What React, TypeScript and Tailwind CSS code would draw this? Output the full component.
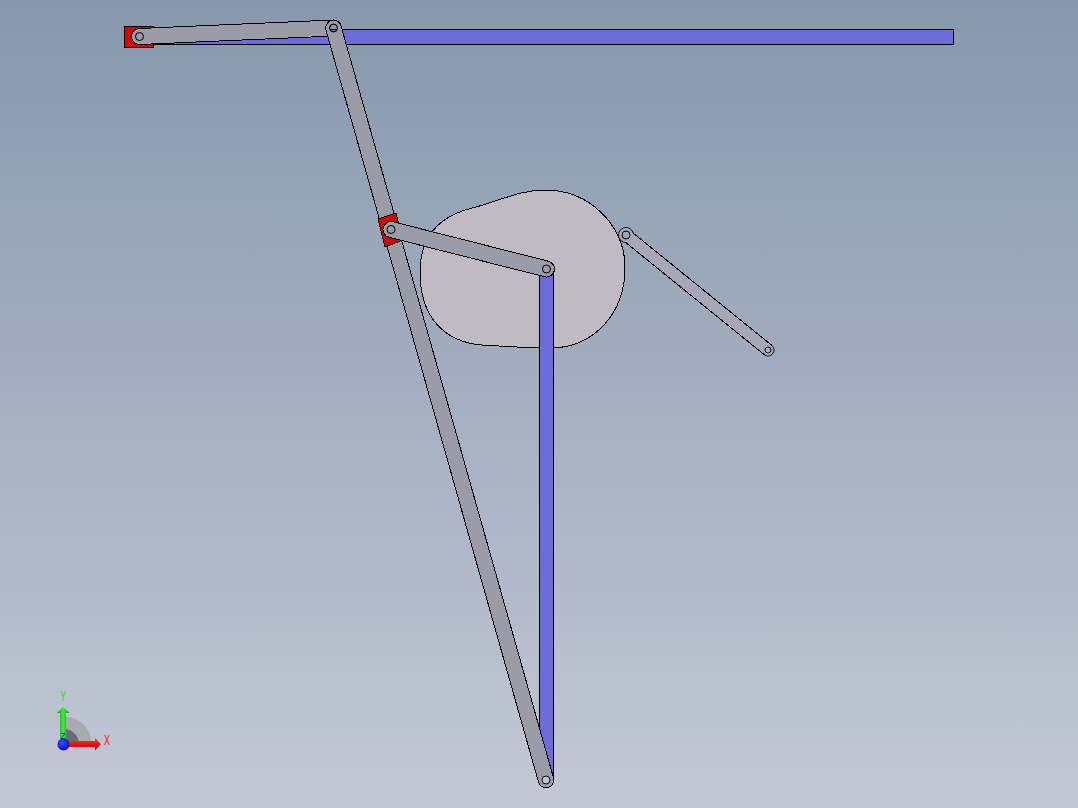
const linkFill = '#9a9ca8';
const outline = '#000000';

interface LinkProps {
  x1: number;
  y1: number;
  x2: number;
  y2: number;
  r1: number;
  r2: number;
  hole1: number;
  hole2: number;
  fill?: string;
  pin1?: string;
  pin2?: string;
}

const circlePath = (x: number, y: number, r: number) =>
  `M ${x - r} ${y} A ${r} ${r} 0 1 0 ${x + r} ${y} A ${r} ${r} 0 1 0 ${x - r} ${y} Z`;

// a flat bar with a rounded end on both pivots, the pin holes are cut through
function Link({ x1, y1, x2, y2, r1, r2, hole1, hole2, fill = linkFill, pin1 = 'none', pin2 = 'none' }: LinkProps) {
  const a = Math.atan2(y2 - y1, x2 - x1);
  const nx = -Math.sin(a);
  const ny = Math.cos(a);
  const body = [
    `M ${x1 + nx * r1} ${y1 + ny * r1}`,
    `L ${x2 + nx * r2} ${y2 + ny * r2}`,
    `A ${r2} ${r2} 0 0 0 ${x2 - nx * r2} ${y2 - ny * r2}`,
    `L ${x1 - nx * r1} ${y1 - ny * r1}`,
    `A ${r1} ${r1} 0 0 0 ${x1 + nx * r1} ${y1 + ny * r1}`,
    'Z',
  ].join(' ');
  const cut = `${body} ${circlePath(x1, y1, hole1)} ${circlePath(x2, y2, hole2)}`;
  return (
    <g>
      <path d={cut} fill={fill} fillRule="evenodd" />
      <path d={body} fill="none" stroke={outline} strokeWidth={1} shapeRendering="crispEdges" />
      <circle cx={x1} cy={y1} r={hole1} fill={pin1} stroke={outline} strokeWidth={1} />
      <circle cx={x2} cy={y2} r={hole2} fill={pin2} stroke={outline} strokeWidth={1} />
    </g>
  );
}

// thin rocker, its ends are wider than the bar
function Rocker() {
  const fill = '#a6a8ba';
  const a = Math.atan2(115, 142);
  const nx = -Math.sin(a) * 6;
  const ny = Math.cos(a) * 6;
  const bar = `M ${626 + nx} ${235 + ny} L ${768 + nx} ${350 + ny} L ${768 - nx} ${350 - ny} L ${626 - nx} ${235 - ny} Z`;
  return (
    <g>
      <circle cx={626} cy={235} r={7.5} fill={fill} stroke={outline} />
      <circle cx={768} cy={350} r={6} fill={fill} stroke={outline} />
      <path d={bar} fill={fill} stroke={outline} shapeRendering="crispEdges" />
      <circle cx={626} cy={235} r={6.9} fill={fill} />
      <circle cx={768} cy={350} r={5.4} fill={fill} />
      <circle cx={626} cy={235} r={4} fill="#99a6b8" stroke={outline} />
      <circle cx={768} cy={350} r={3} fill="#a4afbf" stroke={outline} />
    </g>
  );
}

function Triad() {
  const labelFont = "'Liberation Sans', sans-serif";
  return (
    <g>
      <defs>
        <linearGradient id="yArrow" x1="0" y1="0" x2="1" y2="0">
          <stop offset="0" stopColor="#0a9a0a" />
          <stop offset="0.5" stopColor="#3cf03c" />
          <stop offset="1" stopColor="#0a8a0a" />
        </linearGradient>
        <linearGradient id="xArrow" x1="0" y1="0" x2="0" y2="1">
          <stop offset="0" stopColor="#f04040" />
          <stop offset="0.5" stopColor="#f01010" />
          <stop offset="1" stopColor="#a00808" />
        </linearGradient>
        <radialGradient id="zBall" cx="0.4" cy="0.35" r="0.7">
          <stop offset="0" stopColor="#3a4cff" />
          <stop offset="1" stopColor="#0508c0" />
        </radialGradient>
      </defs>
      <path d="M 64 744 L 64 716.5 A 27.5 27.5 0 0 1 91.5 744 Z" fill="#a9abb3" />
      <path d="M 64 744 L 64 729 A 15 15 0 0 1 79 744 Z" fill="#6a6b72" />
      <polygon points="60,744 60,713 57,713 63,707 69.5,713 66,713 66,744" fill="url(#yArrow)" />
      <polygon points="64,741 95,741 95,738 101,744 95,750.5 95,747 64,747" fill="url(#xArrow)" />
      <circle cx={63.5} cy={744.5} r={6} fill="url(#zBall)" />
      <text x={60} y={701} fontSize={15} fill="#14e014" fontFamily={labelFont} textLength={6} lengthAdjust="spacingAndGlyphs">Y</text>
      <text x={104} y={744.5} fontSize={15} fill="#f01414" fontFamily={labelFont} textLength={6} lengthAdjust="spacingAndGlyphs">X</text>
      <text x={60.5} y={738.5} fontSize={9} fill="#1414e0" fontFamily={labelFont} textLength={5} lengthAdjust="spacingAndGlyphs">Z</text>
    </g>
  );
}

export default function App() {
  return (
    <div className="h-[808px] w-full overflow-hidden bg-gradient-to-b from-[#8798ad] to-[#c3c8d5]">
      <svg width={1078} height={808} viewBox="0 0 1078 808" className="block">
        {/* cam */}
        <path
          d="M 545 190 C 590 190 625 226 625 268 C 625 312 595 348 550 348 C 525 348 500 346 482 345 C 445 342 420 318 420 272 C 420 235 440 216 472 208 C 498 202 518 190 545 190 Z"
          fill="#c0bbc2"
          stroke={outline}
          strokeWidth={1}
          shapeRendering="crispEdges"
        />

        {/* blue sliders */}
        <g fill="#6c6cdc" stroke={outline} strokeWidth={1} shapeRendering="crispEdges">
          <rect x={150} y={29.5} width={803} height={15} />
          <polygon points="539.5,272 553.5,272 553.5,779 549,775 539.5,740" />
        </g>

        <rect x={124.5} y={26.5} width={29} height={20.5} fill="#d00808" stroke={outline} strokeWidth={1} shapeRendering="crispEdges" />
        <Link x1={139.5} y1={36.5} x2={333.5} y2={28} r1={8} r2={8} hole1={4} hole2={4} pin1={linkFill} />
        <Link x1={333.5} y1={28} x2={546} y2={780} r1={7.8} r2={7.8} hole1={4} hole2={4} />

        <polygon points="378,219 396,213 403,240 385,247" fill="#d00808" stroke={outline} strokeWidth={1} shapeRendering="crispEdges" />
        <Link x1={391} y1={229.5} x2={546.5} y2={269} r1={8} r2={8} hole1={4} hole2={4} pin1={linkFill} pin2={linkFill} />

        <Rocker />
        <Triad />
      </svg>
    </div>
  );
}
